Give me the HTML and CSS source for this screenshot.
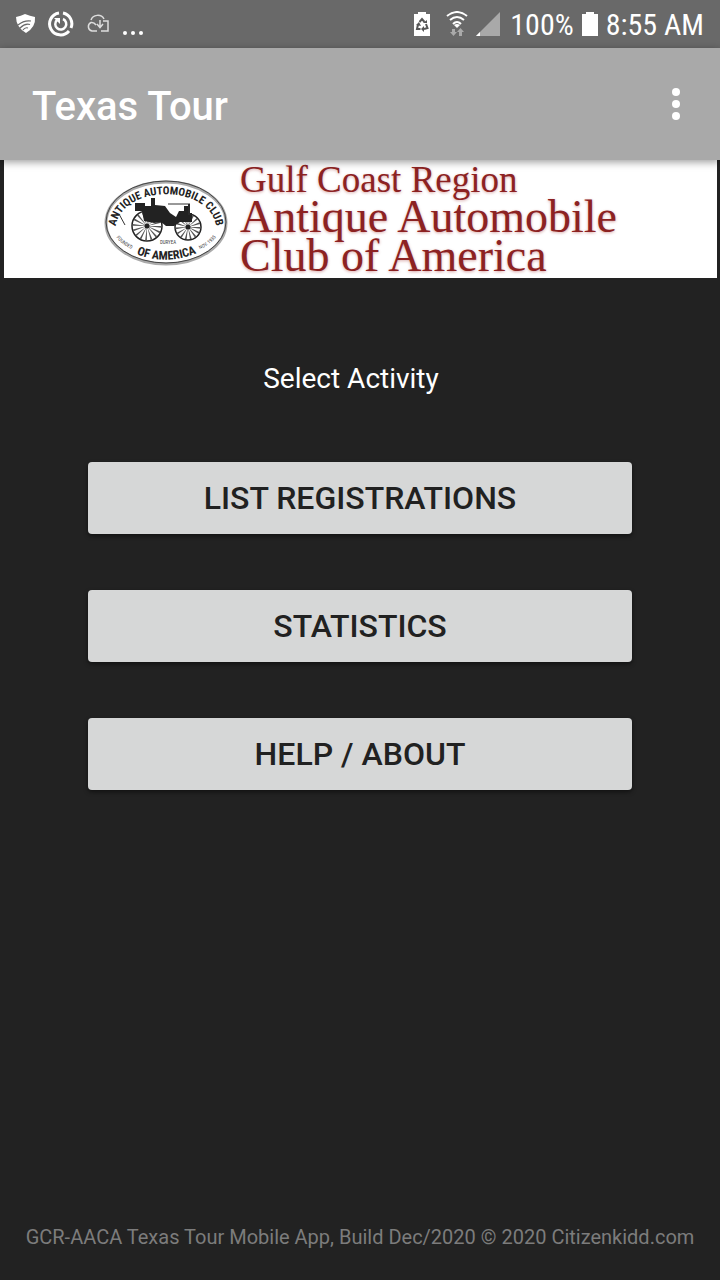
FILE: index.html
```
<!DOCTYPE html>
<html lang="en">
<head>
    <meta charset="UTF-8">
    <meta name="viewport" content="width=device-width, initial-scale=1.0">
    <title>Texas Tour</title>
    <link rel="stylesheet" href="styles.css">
</head>
<body>
    <div class="status-bar">
        <div class="status-left">
            <svg width="20" height="24" viewBox="0 0 20 24">
                <path fill="#fff" d="M0 5Q5 4 9 2Q14 4 19 5Q20 15 10 21Q0 15 0 5Z"/>
                <path fill="none" stroke="#696969" stroke-width="1.2" d="M2 13Q8 8 15 9M4 16Q9 11 14 12.500M7 18Q9 15 12 16"/>
            </svg>
            <svg width="26" height="26" viewBox="0 0 26 26" fill="none" stroke="#fff">
                <path stroke-width="3" d="M11 2A11 11 0 1 0 21 20M23 17A11 11 0 0 0 15 2"/>
                <path stroke-width="2.5" d="M15 8A5.500 5.500 0 1 1 9 9"/>
                <path fill="#fff" stroke="none" d="M6 7H12V13Z"/>
            </svg>
            <svg width="24" height="24" viewBox="0 0 24 24" fill="none" stroke="#ddd" stroke-width="1.5">
                <path d="M11 19H6A4.500 4.500 0 0 1 5 10.500Q8 10 10 13M5 8A7 6.500 0 0 1 18 7M17 9H22V19H15M14 8V15M11 12L14 15.500L17 12"/>
            </svg>
            <svg width="22" height="24" viewBox="0 0 22 24" fill="#fff">
                <circle cx="3" cy="21" r="2"/>
                <circle cx="11" cy="21" r="2"/>
                <circle cx="19" cy="21" r="2"/>
            </svg>
        </div>
        <div class="status-right">
            <svg width="16" height="24" viewBox="0 0 16 24">
                <path fill="#fff" d="M4 0H12V2H16V24H0V2H4Z"/>
                <path fill="none" stroke="#555" stroke-width="2" d="M5.500 10L8 7L10.500 10M12 12L13.500 16L10 17M6.500 17H3L4 12.500"/>
                <path fill="#555" d="M9 11H13V8ZM10 14V20L7 17ZM2 13L5 10L7 14Z"/>
            </svg>
            <svg class="wifi" width="22" height="26" viewBox="0 0 22 26">
                <path fill="none" stroke="#fff" stroke-width="2" d="M1 5Q11 -3 21 5M4 9Q11 3 18 9M7 13Q11 9 15 13"/>
                <path fill="#fff" d="M8 14Q11 12 14 14L11 17Z"/>
                <path fill="#aaa" d="M6 18H9V21H11L7.500 25L4 21H6ZM13 25V21H11L14.500 17L18 21H16V25Z"/>
            </svg>
            <svg class="signal" width="24" height="24" viewBox="0 0 24 24">
                <path fill="#a9a9a9" d="M0 24L24 0V24Z"/>
                <path fill="#fff" d="M0 24L4 20V24Z"/>
            </svg>
            <span class="battery-level">100%</span>
            <svg class="battery" width="16" height="24" viewBox="0 0 16 24">
                <path fill="#fff" d="M4 0H12V2H16V24H0V2H4Z"/>
            </svg>
            <span>8:55 AM</span>
        </div>
    </div>

    <header class="app-bar">
        <h1>Texas Tour</h1>
        <button type="button" class="menu-btn" aria-label="More options">
            <svg width="8" height="32" viewBox="0 0 8 32" fill="#fff">
                <circle cx="4" cy="4" r="4"/>
                <circle cx="4" cy="16" r="4"/>
                <circle cx="4" cy="28" r="4"/>
            </svg>
        </button>
    </header>

    <div class="banner">
        <svg class="emblem" width="124" height="88" viewBox="0 0 124 88">
            <defs>
                <path id="arcTop" d="M12 46C20 5 104 5 112 46"/>
                <path id="arcBottom" d="M32 75Q62 87 93 74"/>
                <path id="arcLeft" d="M9 54Q17 67 33 72"/>
                <path id="arcRight" d="M91 72Q107 67 115 54"/>
            </defs>
            <ellipse cx="62" cy="44" rx="60" ry="41" fill="#fff" stroke="#aaa" stroke-width="3"/>
            <ellipse cx="62" cy="43" rx="60" ry="41" fill="none" stroke="#444" stroke-width="1"/>
            <text class="emblem-text"><textPath href="#arcTop" startOffset="50%">ANTIQUE AUTOMOBILE CLUB</textPath></text>
            <text class="emblem-text emblem-bottom"><textPath href="#arcBottom" startOffset="50%">OF AMERICA</textPath></text>
            <text class="emblem-small"><textPath href="#arcLeft" startOffset="50%">FOUNDED</textPath></text>
            <text class="emblem-small"><textPath href="#arcRight" startOffset="50%">NOV. 1935</textPath></text>
            <text class="emblem-small" x="64" y="65">DURYEA</text>
            <!-- the car -->
            <g fill="#fff" stroke="#222" stroke-width="1.5">
                <circle cx="43" cy="47" r="15"/>
                <circle cx="84" cy="48" r="13"/>
            </g>
            <g fill="none" stroke="#555">
                <circle cx="43" cy="47" r="8" stroke-width="13" stroke-dasharray="1 2.140"/>
                <circle cx="84" cy="48" r="7" stroke-width="11" stroke-dasharray="1 1.930"/>
            </g>
            <path fill="#222" d="M31 24H41V27H47V19H51V26L61 27L66 34L72 38L75 32H80V27H84V25H86V34H88V43H76L70 47H62L57 43L50 44L40 42L38 32H31Z"/>
            <path fill="none" stroke="#333" stroke-width="1" d="M64 25H84M85 24V36M15 35L21 46"/>
            <circle cx="43" cy="47" r="2.500" fill="#222"/>
            <circle cx="84" cy="48" r="2.500" fill="#222"/>
        </svg>
        <div class="club-name">
            <span class="region">Gulf Coast Region</span>
            <span>Antique Automobile</span>
            <span>Club of America</span>
        </div>
    </div>

    <main>
        <h2>Select Activity</h2>
        <button type="button" class="activity-btn">LIST REGISTRATIONS</button>
        <button type="button" class="activity-btn">STATISTICS</button>
        <button type="button" class="activity-btn">HELP / ABOUT</button>
    </main>

    <footer>GCR-AACA Texas Tour Mobile App, Build Dec/2020 © 2020 Citizenkidd.com</footer>
</body>
</html>
```
FILE: styles.css
```
* {
    box-sizing: border-box;
}
body {
    font-family: Roboto, sans-serif;
    background-color: #222;
    color: white;
    display: flex;
    flex-direction: column;
    min-height: 100vh;
    margin: 0;
}
svg {
    display: block;
    flex-shrink: 0;
}
.status-bar {
    display: flex;
    justify-content: space-between;
    align-items: center;
    height: 48px;
    padding: 0 16px;
    background-color: #696969;
    font-family: "Roboto Condensed", Roboto, sans-serif;
    font-size: 30px;
    white-space: nowrap;
}
.status-left,
.status-right {
    display: flex;
    align-items: center;
}
.status-left {
    gap: 12px;
}
.wifi {
    margin-left: 16px;
}
.signal {
    margin-left: 8px;
}
.battery-level {
    margin-left: 10px;
}
.battery {
    margin: 0 8px;
}
.app-bar {
    display: flex;
    justify-content: space-between;
    align-items: center;
    height: 112px;
    padding: 0 32px;
    background-color: #a9a9a9;
    box-shadow: 0 2px 8px rgba(0, 0, 0, 0.4);
    position: relative;
    z-index: 1;
}
.app-bar h1 {
    margin: 4px 0 0;
    font-size: 40px;
    font-weight: 500;
}
.menu-btn {
    padding: 8px;
    border: none;
    background: none;
    cursor: pointer;
}
.banner {
    display: flex;
    justify-content: center;
    align-items: center;
    gap: 12px;
    height: 118px;
    margin: 0 3px 0 4px;
    background-color: white;
}
.emblem {
    margin-top: 8px;
}
.emblem-text {
    font-family: "Roboto Condensed", "Liberation Sans", sans-serif;
    font-size: 11px;
    font-weight: bold;
    text-anchor: middle;
    fill: #222;
}
.emblem-bottom {
    font-size: 12px;
}
.emblem-small {
    font-family: "Roboto Condensed", "Liberation Sans", sans-serif;
    font-size: 5px;
    text-anchor: middle;
    fill: #444;
}
.club-name {
    display: flex;
    flex-direction: column;
    font-family: "Liberation Serif", serif;
    font-size: 46px;
    line-height: 39px;
    color: #8c2222;
    text-shadow: 0 1px 3px rgba(150, 30, 30, 0.4);
    white-space: nowrap;
}
.club-name .region {
    font-size: 37px;
    line-height: 34px;
}
main {
    display: flex;
    flex-direction: column;
    gap: 56px;
    padding: 0 88px;
}
main h2 {
    margin: 84px 18px 10px 0;
    font-size: 28px;
    line-height: 34px;
    font-weight: normal;
    text-align: center;
}
.activity-btn {
    height: 72px;
    border: none;
    border-radius: 4px;
    background-color: #d6d7d7;
    box-shadow: 0 2px 4px rgba(0, 0, 0, 0.5);
    color: #212121;
    font-family: inherit;
    font-size: 32px;
    font-weight: 500;
    cursor: pointer;
}
footer {
    margin-top: auto;
    padding: 0 16px 30px;
    color: #7c7c7c;
    font-size: 20px;
    line-height: 26px;
    text-align: center;
}
```
